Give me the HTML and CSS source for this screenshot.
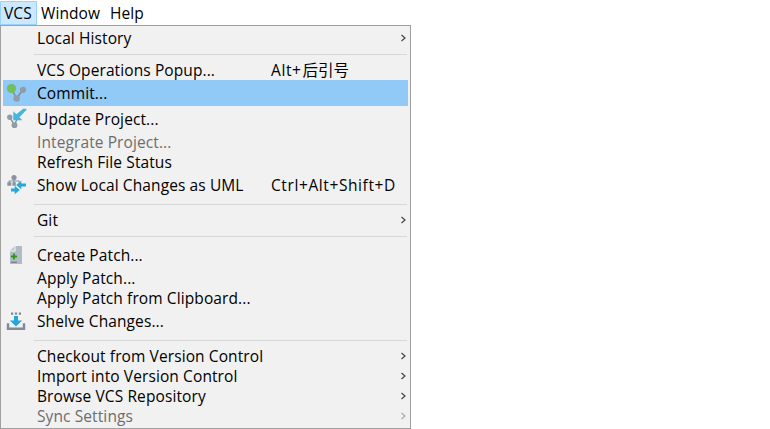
FILE: index.html
```html
<!DOCTYPE html>
<html lang="en">
<head>
<meta charset="utf-8">
<title>VCS menu</title>
<link rel="stylesheet" href="styles.css">
</head>
<body>
<nav class="menubar">
  <span class="tab open">VCS</span><span class="tab window">Window</span><span class="tab">Help</span>
</nav>
<div class="menu">
  <div class="item"><span class="label">Local History</span><svg class="arrow" viewBox="0 0 6 8"><path d="M1.5 1 5 4 1.5 7"/></svg></div>
  <div class="sep"></div>
  <div class="item"><span class="label">VCS Operations Popup...</span><span class="key">Alt+<span class="cjk">后引号</span></span></div>
  <div class="item tall selected">
    <svg class="icon" viewBox="0 0 32 26"><path d="M8.5 9 13.7 18.5 20 9.3" fill="none" stroke="#7f8b96" stroke-width="1.5"/><circle cx="20" cy="9.8" r="3.1" fill="#919ca8"/><circle cx="13.7" cy="18.5" r="3.2" fill="#919ca8"/><circle cx="8.5" cy="8.6" r="4.6" fill="#73bf58"/></svg>
    <span class="label">Commit...</span></div>
  <div class="item tall">
    <svg class="icon" viewBox="0 0 32 26"><path d="M6.7 11.3 11.5 19 14.3 12.5" fill="none" stroke="#8795a1" stroke-width="1.5"/><circle cx="6.8" cy="11.3" r="2.7" fill="#919ca8"/><circle cx="11.5" cy="19.2" r="2.9" fill="#919ca8"/><path d="M10.3 5.2V14.2H19.3L16.4 11.3 23.4 4V2.8H20.2L13.3 8.2Z" fill="#40b6e0"/></svg>
    <span class="label">Update Project...</span></div>
  <div class="item disabled"><span class="label">Integrate Project...</span></div>
  <div class="item"><span class="label">Refresh File Status</span></div>
  <div class="item tall">
    <svg class="icon" viewBox="0 0 32 26"><circle cx="11" cy="5.5" r="2.6" fill="#8795a1"/><path d="M11 6V11M6.2 11V9H16V10.5" fill="none" stroke="#8795a1" stroke-width="1.2"/><path d="M4.3 10.3h4v3.4h-4zM9.4 10.3h3.4v3.4H9.4z" fill="#8795a1"/><path d="M13.2 13 18.3 8.7V11.6H23V14.4H18.3V17.3ZM16.8 18 11.7 13.7V16.6H8V19.4H11.7V22.3Z" fill="#24a8dc"/></svg>
    <span class="label">Show Local Changes as UML</span><span class="key">Ctrl+Alt+Shift+D</span></div>
  <div class="sep"></div>
  <div class="item"><span class="label">Git</span><svg class="arrow" viewBox="0 0 6 8"><path d="M1.5 1 5 4 1.5 7"/></svg></div>
  <div class="sep"></div>
  <div class="item tall">
    <svg class="icon" viewBox="0 0 32 26"><path d="M12.6 4H19V22H7V9.6H12.6Z" fill="#b1bbc3"/><path d="M7 8.6 11.6 4V8.6Z" fill="#c2cad0"/><path d="M11 11.5V17.5M8 14.5H14" stroke="#2c9716" stroke-width="1.8"/><path d="M8 20.3H14" stroke="#77838c" stroke-width="1.3"/></svg>
    <span class="label">Create Patch...</span></div>
  <div class="item"><span class="label">Apply Patch...</span></div>
  <div class="item"><span class="label">Apply Patch from Clipboard...</span></div>
  <div class="item tall">
    <svg class="icon" viewBox="0 0 32 26"><path d="M8 4.5h2.2v2.2H8zM11.9 4.5h2.2v2.2h-2.2zM15.8 4.5H18v2.2h-2.2z" fill="#7d8c98"/><path d="M11 8H15V12.5H19.2L13 18.5 6.8 12.5H11Z" fill="#24a8dc"/><path d="M5 15.3V20.8H21V15.3" fill="none" stroke="#7d8c98" stroke-width="2.4"/></svg>
    <span class="label">Shelve Changes...</span></div>
  <div class="sep"></div>
  <div class="item"><span class="label">Checkout from Version Control</span><svg class="arrow" viewBox="0 0 6 8"><path d="M1.5 1 5 4 1.5 7"/></svg></div>
  <div class="item"><span class="label">Import into Version Control</span><svg class="arrow" viewBox="0 0 6 8"><path d="M1.5 1 5 4 1.5 7"/></svg></div>
  <div class="item"><span class="label">Browse VCS Repository</span><svg class="arrow" viewBox="0 0 6 8"><path d="M1.5 1 5 4 1.5 7"/></svg></div>
  <div class="item disabled"><span class="label">Sync Settings</span><svg class="arrow" viewBox="0 0 6 8"><path d="M1.5 1 5 4 1.5 7"/></svg></div>
</div>
</body>
</html>
```
FILE: styles.css
```css
* { box-sizing: border-box; }
body {
  margin: 0;
  background: #fff;
  color: #000;
  font: 15.5px/20px "Open Sans", "Noto Sans CJK SC", sans-serif;
  letter-spacing: 0.1px;
  overflow: hidden;
}
.menubar { display: flex; height: 25px; padding-top: 1px; }
.tab { height: 24px; padding: 2px 3px; line-height: 20px; border: 1px solid transparent; border-width: 0 1px; }
.tab.open { width: 37px; padding: 1px 0 1px 3px; border: 1px solid #99d1ff; background: #cce8ff; }
.tab.window { width: 69px; }
.menu {
  width: 411px;
  height: 404px;
  padding: 2px;
  border: 1px solid #a0a0a0;
  background: #f1f1f1;
}
.item {
  display: grid;
  grid-template-columns: 34px 234px 1fr 8px;
  align-items: center;
  height: 20px;
  white-space: nowrap;
}
.tall { height: 26px; }
.selected { background: #91c9f7; }
.disabled { color: #6d6d6d; }
.icon { grid-column: 1; grid-row: 1; width: 32px; height: 26px; }
.label { grid-column: 2; grid-row: 1; }
.key { grid-column: 3; grid-row: 1; letter-spacing: 0.6px; }
.cjk { margin-left: 1px; font: 15.5px/1 "Noto Sans CJK SC", sans-serif; letter-spacing: 0; }
.arrow { grid-column: 4; grid-row: 1; width: 6px; height: 8px; fill: none; stroke: #444; stroke-width: 1.2; }
.disabled .arrow { stroke: #aaa; }
.sep { height: 12px; margin: 0 1px 0 31px; padding-top: 6px; }
.sep::before { content: ""; display: block; height: 1px; background: #d7d7d7; }
```
